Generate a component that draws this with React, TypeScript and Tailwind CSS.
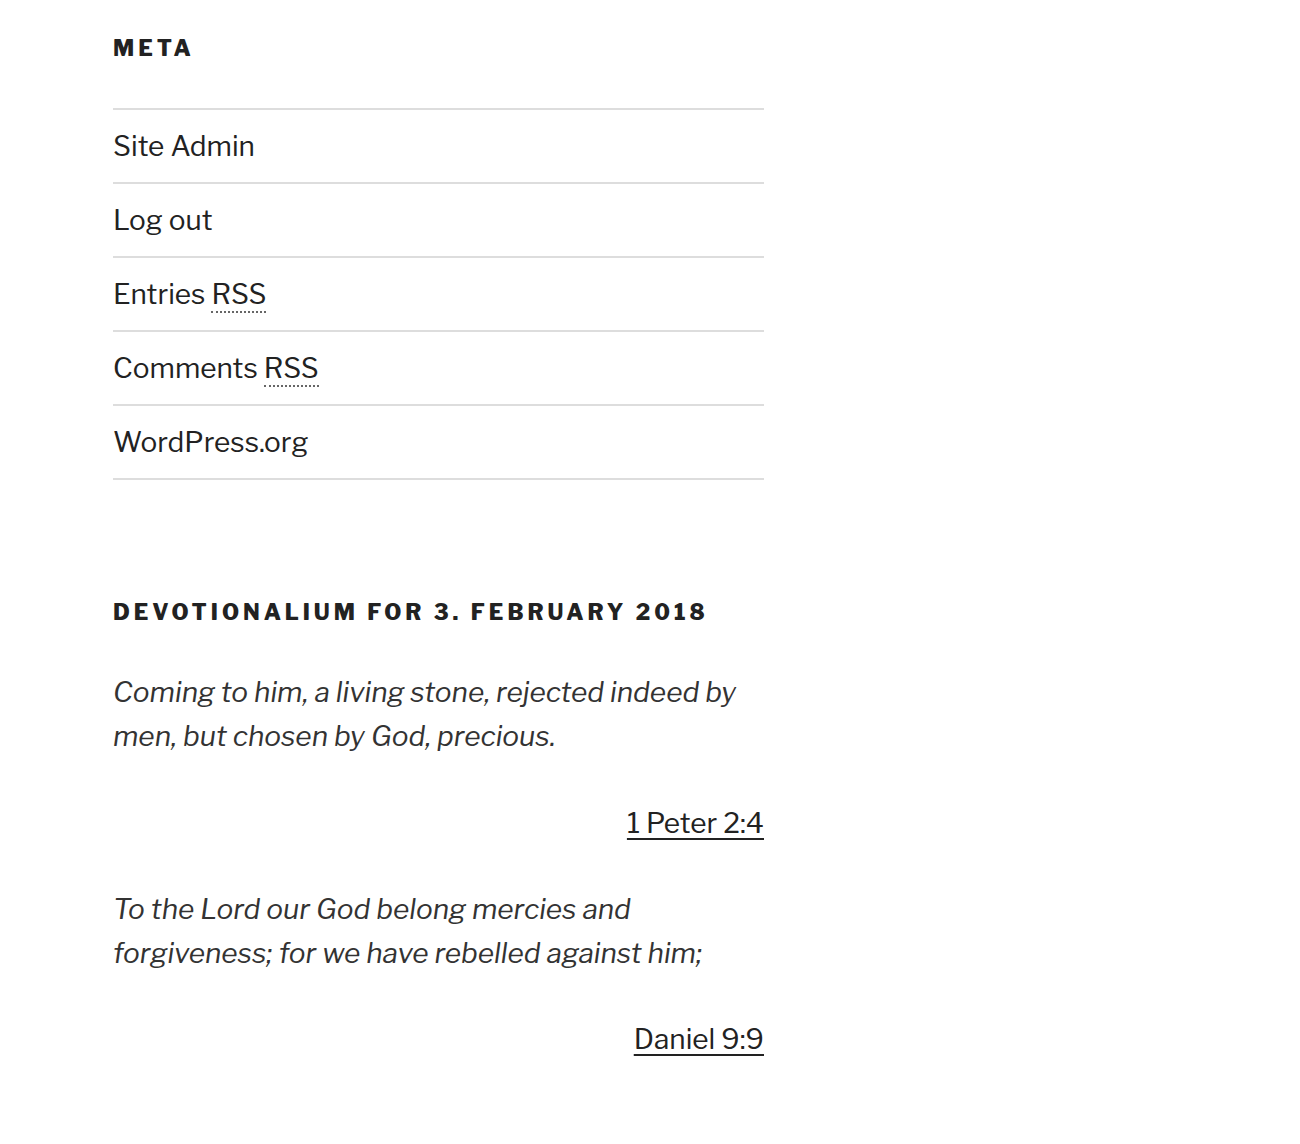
import React from "react";

const font = { fontFamily: '"Libre Franklin", Roboto, "Liberation Sans", sans-serif' };

function Item({ children }: { children: React.ReactNode }) {
  return (
    <li className="border-b-2 border-[#dddddd] h-[74px] flex items-center text-[28px] text-[#222222]">
      {children}
    </li>
  );
}

function Rss() {
  return (
    <abbr className="no-underline border-b-2 border-dotted border-[#666666] leading-[1]">RSS</abbr>
  );
}

export default function App() {
  return (
    <div className="bg-white min-h-[1144px] w-[1300px]" style={font}>
      <div className="pl-[113px] w-[764px] pt-[31px]">
        <h2 className="text-[22px] font-extrabold uppercase tracking-[0.18em] text-[#222222] leading-[34px]">
          Meta
        </h2>
        <ul className="mt-[43px] border-t-2 border-[#dddddd]">
          <Item>Site Admin</Item>
          <Item>Log out</Item>
          <Item>
            <span>
              Entries <Rss />
            </span>
          </Item>
          <Item>
            <span>
              Comments <Rss />
            </span>
          </Item>
          <Item>WordPress.org</Item>
        </ul>

        <h2 className="mt-[115px] text-[22px] font-extrabold uppercase tracking-[0.18em] text-[#222222] leading-[34px]">
          Devotionalium for 3. February 2018
        </h2>
        <p className="mt-[41px] text-[28px] italic leading-[44px] text-[#333333]">
          Coming to him, a living stone, rejected indeed by men, but chosen by God, precious.
        </p>
        <p className="mt-[43px] text-right text-[28px] leading-[44px] text-[#222222]">
          <span className="underline decoration-2 underline-offset-[5px] decoration-[#222222]">1 Peter 2:4</span>
        </p>
        <p className="mt-[42px] text-[28px] italic leading-[44px] text-[#333333]">
          To the Lord our God belong mercies and forgiveness; for we have rebelled against him;
        </p>
        <p className="mt-[42px] text-right text-[28px] leading-[44px] text-[#222222]">
          <span className="underline decoration-2 underline-offset-[5px] decoration-[#222222]">Daniel 9:9</span>
        </p>
      </div>
    </div>
  );
}
